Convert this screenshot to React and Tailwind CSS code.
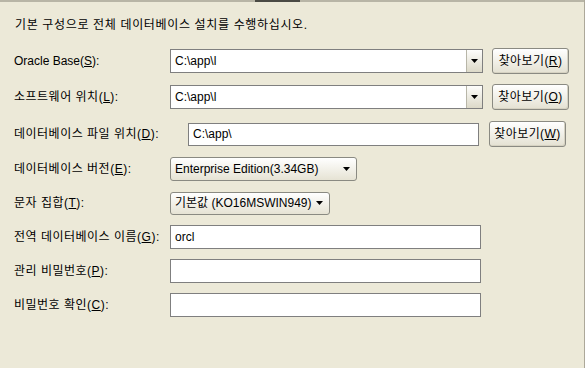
import React from 'react';

const font = { fontFamily: '"Liberation Sans", "Noto Sans CJK KR", sans-serif' };

// label with underlined mnemonic letter, e.g. Oracle Base(S):
const Label = ({ text, k, className = '' }) => (
  <span className={`text-[12px] leading-[16px] text-black whitespace-nowrap ${className}`}>
    {text}(<span className="underline underline-offset-1">{k}</span>):
  </span>
);

const Arrow = () => (
  <svg width="7" height="4" viewBox="0 0 7 4" className="block">
    <path d="M0 0h7L3.5 4z" fill="#000" />
  </svg>
);

const BrowseButton = ({ k }) => (
  <button className="h-[26px] w-[77px] rounded-[3px] border border-[#8a8a82] bg-gradient-to-b from-white to-[#e4e1d2] text-[12px] leading-[16px] tracking-[0.4px] text-black flex items-center justify-center shadow-[inset_-1px_-1px_0_#d6d2c2]">
    찾아보기(<span className="underline underline-offset-1">{k}</span>)
  </button>
);

const EditableCombo = ({ value }) => (
  <div className="flex h-[24px] w-[313px] border border-[#7f7f7f] bg-white">
    <div className="flex-1 flex items-center pl-[4px] text-[12px] text-black">{value}</div>
    <div className="w-[16px] h-full border-l border-[#b8b6a8] bg-gradient-to-b from-[#fdfdfb] to-[#dcd9c8] flex items-center justify-center">
      <Arrow />
    </div>
  </div>
);

const SelectCombo = ({ value, width, h }) => (
  <div
    className={`flex items-center justify-between rounded-[3px] border border-[#8a8a82] bg-gradient-to-b from-white to-[#e6e3d4] pl-[4px] pr-[6px] text-[12px] text-black ${width} ${h}`}
  >
    <span className="whitespace-nowrap">{value}</span>
    <Arrow />
  </div>
);

const TextBox = ({ value = '', className = '' }) => (
  <div className={`flex items-center border border-[#7f7f7f] bg-white pl-[4px] text-[12px] text-black ${className}`}>
    {value}
  </div>
);

export default function App() {
  return (
    <div style={font} className="relative w-[585px] h-[368px] bg-[#ece9d8] overflow-hidden border-r border-[#aca899]">
      <div className="h-[2px] w-full bg-[#b8b5a6]" />
      <div className="absolute top-0 left-[255px] h-[2px] w-[45px] bg-[#4a4a44]" />

      <div className="pl-[15px] pt-[15px] text-[12px] leading-[16px] tracking-[0.65px] text-black">
        기본 구성으로 전체 데이터베이스 설치를 수행하십시오.
      </div>

      <div className="flex flex-col pl-[14px]">
        <div className="mt-[15px] h-[26px] flex items-center">
          <Label text="Oracle Base" k="S" className="w-[156px]" />
          <EditableCombo value="C:\app\l" />
          <div className="ml-[9px]">
            <BrowseButton k="R" />
          </div>
        </div>

        <div className="mt-[10px] h-[26px] flex items-center">
          <Label text="소프트웨어 위치" k="L" className="w-[156px] tracking-[0.5px]" />
          <EditableCombo value="C:\app\l" />
          <div className="ml-[9px]">
            <BrowseButton k="O" />
          </div>
        </div>

        <div className="mt-[11px] h-[26px] flex items-center">
          <Label text="데이터베이스 파일 위치" k="D" className="w-[174px] tracking-[0.5px]" />
          <TextBox value="C:\app\" className="w-[291px] h-[23px]" />
          <div className="ml-[10px]">
            <BrowseButton k="W" />
          </div>
        </div>

        <div className="mt-[9px] h-[26px] flex items-center">
          <Label text="데이터베이스 버전" k="E" className="w-[156px] tracking-[0.5px]" />
          <SelectCombo value="Enterprise Edition(3.34GB)" width="w-[187px]" h="h-[24px]" />
        </div>

        <div className="mt-[8px] h-[26px] flex items-center">
          <Label text="문자 집합" k="T" className="w-[156px] tracking-[0.5px]" />
          <SelectCombo value="기본값 (KO16MSWIN949)" width="w-[160px]" h="h-[23px]" />
        </div>

        <div className="mt-[8px] h-[26px] flex items-center">
          <Label text="전역 데이터베이스 이름" k="G" className="w-[156px] tracking-[0.5px]" />
          <TextBox value="orcl" className="w-[311px] h-[24px]" />
        </div>

        <div className="mt-[8px] h-[26px] flex items-center">
          <Label text="관리 비밀번호" k="P" className="w-[156px] tracking-[0.5px]" />
          <TextBox className="w-[311px] h-[24px]" />
        </div>

        <div className="mt-[8px] h-[26px] flex items-center">
          <Label text="비밀번호 확인" k="C" className="w-[156px] tracking-[0.5px]" />
          <TextBox className="w-[311px] h-[24px]" />
        </div>
      </div>
    </div>
  );
}
